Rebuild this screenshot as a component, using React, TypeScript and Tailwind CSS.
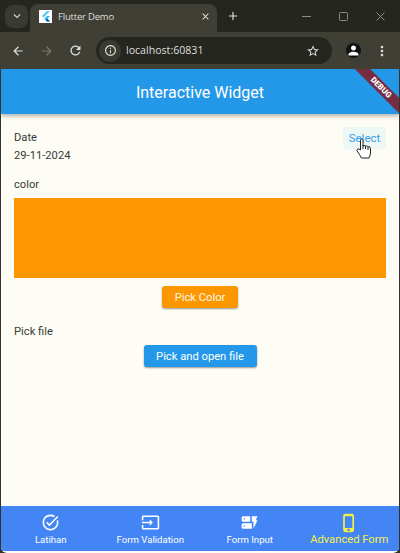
import React from "react";
import { MdTaskAlt, MdInput, MdDynamicForm, MdPhoneIphone, MdArrowBack, MdArrowForward, MdRefresh, MdStarOutline, MdPerson, MdMoreVert, MdInfoOutline, MdAdd, MdClose, MdKeyboardArrowDown } from "react-icons/md";

function BrowserChrome() {
  return (
    <header className="h-[69px] shrink-0 bg-[#3f3f35] text-[#dedede]">
      <div className="flex h-[32px] items-stretch bg-[#262620]">
        <div className="flex w-[30px] items-center justify-center rounded-br-lg pl-[3px]">
          <span className="flex size-[23px] items-center justify-center rounded-lg bg-[#3a3a31]">
            <MdKeyboardArrowDown size={14} />
          </span>
        </div>
        <div className="mt-[4px] flex w-[187px] items-center rounded-t-lg bg-[#3f3f35] pb-[3px] pl-[9px] pr-[6px]">
          <span className="flex size-[13px] items-center justify-center bg-white">
            <svg width="10" height="11" viewBox="0 0 10 11">
              <path d="M6 0H9L2.5 6.5L1 5Z" fill="#54c5f8" />
              <path d="M6 5H9L6.4 7.7L9 10.5H6L3.2 7.7Z" fill="#29b6f6" />
              <path d="M4.7 9.2L6.4 7.7L9 10.5H6Z" fill="#01579b" />
            </svg>
          </span>
          <span className="ml-[6px] flex-1 whitespace-nowrap pt-px font-['Open_Sans',sans-serif] text-[9.5px] tracking-[-0.2px]">Flutter Demo</span>
          <MdClose size={11} />
        </div>
        <div className="flex flex-1 items-center pl-[9px]">
          <MdAdd size={14} />
          <div className="ml-[62px] flex items-center gap-[28px] text-[#8b8b85]">
            <svg width="9" height="9" viewBox="0 0 9 9" stroke="currentColor" fill="none"><path d="M0 4.5H9" /></svg>
            <svg width="9" height="9" viewBox="0 0 9 9" stroke="currentColor" fill="none"><rect x=".5" y=".5" width="8" height="8" rx="1" /></svg>
            <svg width="9" height="9" viewBox="0 0 9 9" stroke="currentColor" fill="none"><path d="M.5.5L8.5 8.5M8.5.5L.5 8.5" /></svg>
          </div>
        </div>
      </div>
      <div className="flex h-[37px] items-center pl-[11px]">
        <MdArrowBack size={14} />
        <MdArrowForward size={14} className="ml-[15px] text-[#777770]" />
        <MdRefresh size={15} className="ml-[14px]" />
        <div className="ml-[13px] flex h-[27px] w-[236px] items-center rounded-full bg-[#262620] pl-[3px] pr-[12px]">
          <span className="flex size-[22px] items-center justify-center rounded-full bg-[#3a3a31]">
            <MdInfoOutline size={13} />
          </span>
          <span className="ml-[5px] flex-1 font-['Open_Sans',sans-serif] text-[10.6px]">localhost:60831</span>
          <MdStarOutline size={14} />
        </div>
        <span className="ml-[14px] flex size-[15px] items-center justify-center rounded-full bg-[#111] text-white">
          <MdPerson size={15} />
        </span>
        <MdMoreVert size={16} className="ml-[13px]" />
      </div>
    </header>
  );
}

const tabs = [
  { label: "Latihan", Icon: MdTaskAlt },
  { label: "Form Validation", Icon: MdInput },
  { label: "Form Input", Icon: MdDynamicForm },
  { label: "Advanced Form", Icon: MdPhoneIphone, active: true },
];

export default function App() {
  return (
    <div className="relative flex h-[553px] w-[400px] flex-col overflow-hidden bg-[#33332e] font-['Roboto',sans-serif] text-[#3a3a36]">
      <BrowserChrome />
      <div className="mx-px flex flex-1 flex-col overflow-hidden rounded-b-md bg-[#fdfdf5]">
        <div className="relative z-10 flex h-[45px] shrink-0 items-center justify-center bg-[#2498e8] pt-[3px] text-[16px] text-white shadow-[0_2px_4px_rgba(0,0,0,0.3)]">
          Interactive Widget
          <div className="absolute right-0 top-0 size-[46px] overflow-hidden">
            <div className="absolute left-[-12px] top-[13px] flex h-[11px] w-[80px] rotate-45 items-center justify-center bg-[#762c43] text-[8px] font-black leading-none text-white">DEBUG</div>
          </div>
        </div>
        <main className="flex flex-1 flex-col px-[13px] pt-[13px] text-[11.2px]">
          <div className="flex items-start justify-between">
            <div className="pt-[2px] leading-[18px]">
              <p>Date</p>
              <p>29-11-2024</p>
            </div>
            <div className="flex h-[22px] w-[43px] items-center justify-center rounded bg-[#edf7f4] pt-px text-[11.5px] text-[#35a0ea]">Select</div>
          </div>
          <p className="mt-[11px] leading-[18px]">color</p>
          <div className="mt-[4px] h-[80px] shrink-0 bg-[#fc9702]" />
          <button className="mt-[8px] flex h-[22px] w-[76px] shrink-0 items-center justify-center self-center rounded-[3px] bg-[#fc9702] pt-[2px] text-[#fff9e8] shadow-[0_1px_2px_rgba(0,0,0,0.4)]">Pick Color</button>
          <p className="mt-[15px] leading-[18px]">Pick file</p>
          <button className="mt-[4px] flex h-[22px] w-[113px] shrink-0 items-center justify-center self-center rounded-[3px] bg-[#2498e8] pt-[2px] text-white shadow-[0_1px_2px_rgba(0,0,0,0.4)]">Pick and open file</button>
        </main>
        <nav className="mb-[2px] grid h-[45px] grid-cols-4 bg-[#4385f5] text-white">
          {tabs.map(({ label, Icon, active }) => (
            <div key={label} className={active ? "flex flex-col items-center pt-[7px] text-[11.2px] leading-[13px] text-[#f5f047]" : "flex flex-col items-center pt-[7px] text-[9.6px] leading-[15px]"}>
              <Icon size={active ? 20 : 19} className="shrink-0" />
              <span className="whitespace-nowrap">{label}</span>
            </div>
          ))}
        </nav>
      </div>
      <svg className="absolute left-[356px] top-[138px]" width="16" height="21" viewBox="0 0 16 21" fill="white" stroke="#222" strokeLinejoin="round">
        <path d="M4.5 12V2.3Q4.5 1 5.7 1T7 2.3V8Q7.6 6.8 9.2 8Q10.5 7.2 11.8 8.7Q14.5 8 14.5 11V15Q14.5 17 13 20H5.5L3.5 16.5L.8 12.5Q1 10.5 3 11Z" />
        <path d="M7 7V11M9.5 8V11M12 9V12" fill="none" />
      </svg>
    </div>
  );
}
